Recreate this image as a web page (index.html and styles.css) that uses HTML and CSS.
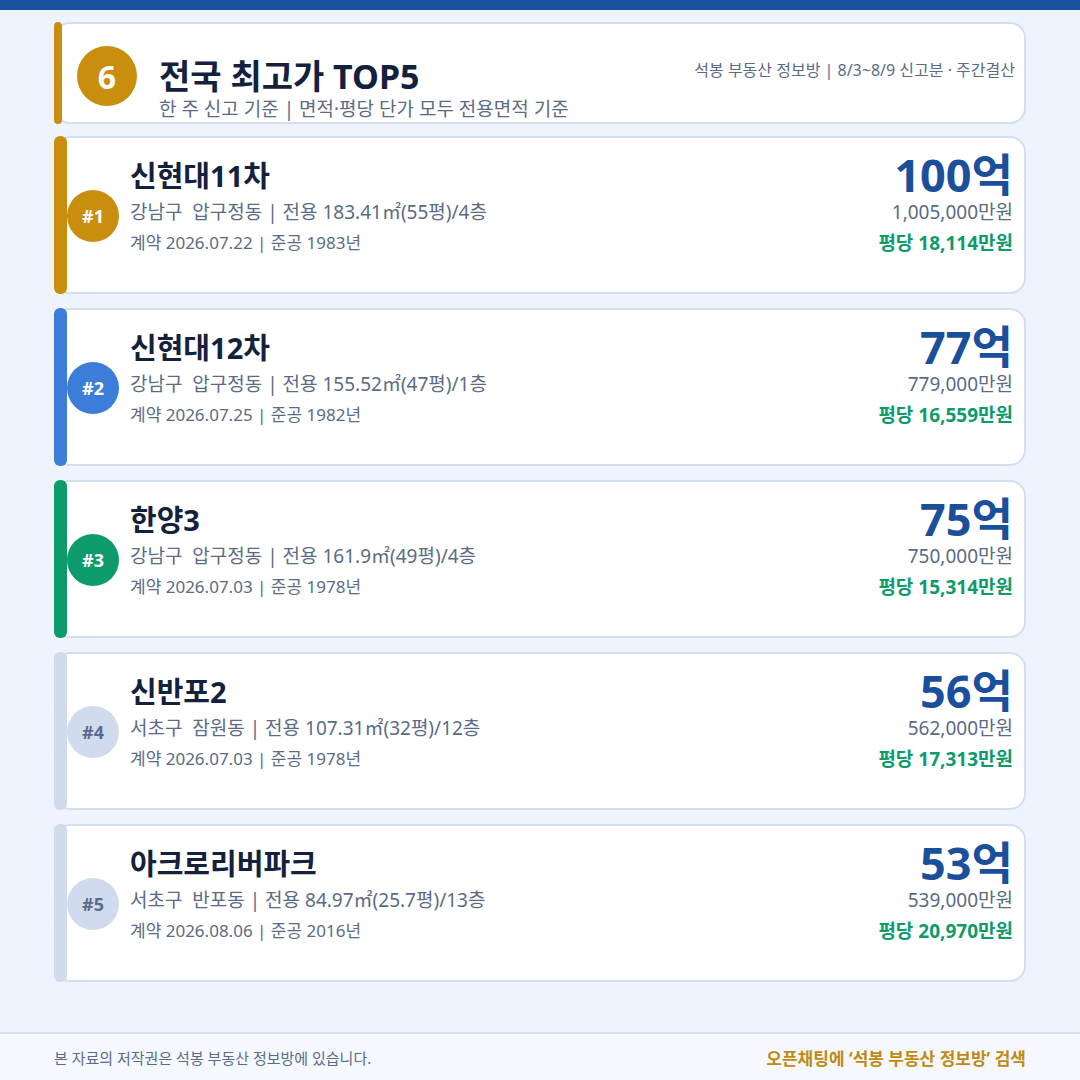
FILE: index.html
```html
<!DOCTYPE html>
<html lang="ko">
<head>
    <meta charset="UTF-8" />
    <meta name="viewport" content="width=device-width, initial-scale=1.0" />
    <title>전국 최고가 TOP5</title>
    <link rel="stylesheet" href="styles.css">
</head>
<body>

<div class="topbar"></div>

<div class="main">
    <div class="head">
        <div class="head-num">6</div>
        <div class="head-text">
            <h1>전국 최고가 TOP5</h1>
            <div class="head-sub">한 주 신고 기준 | 면적·평당 단가 모두 전용면적 기준</div>
        </div>
        <div class="head-meta">석봉 부동산 정보방 | 8/3~8/9 신고분 · 주간결산</div>
    </div>

    <div class="card gold">
        <div class="rank">#1</div>
        <div class="info">
            <div class="name">신현대11차</div>
            <div class="line">강남구&nbsp; 압구정동 | 전용 183.41㎡(55평)/4층</div>
            <div class="line small">계약 2026.07.22 | 준공 1983년</div>
        </div>
        <div class="price">
            <div class="big">100억</div>
            <div class="won">1,005,000만원</div>
            <div class="per">평당 18,114만원</div>
        </div>
    </div>

    <div class="card blue">
        <div class="rank">#2</div>
        <div class="info">
            <div class="name">신현대12차</div>
            <div class="line">강남구&nbsp; 압구정동 | 전용 155.52㎡(47평)/1층</div>
            <div class="line small">계약 2026.07.25 | 준공 1982년</div>
        </div>
        <div class="price">
            <div class="big">77억</div>
            <div class="won">779,000만원</div>
            <div class="per">평당 16,559만원</div>
        </div>
    </div>

    <div class="card green">
        <div class="rank">#3</div>
        <div class="info">
            <div class="name">한양3</div>
            <div class="line">강남구&nbsp; 압구정동 | 전용 161.9㎡(49평)/4층</div>
            <div class="line small">계약 2026.07.03 | 준공 1978년</div>
        </div>
        <div class="price">
            <div class="big">75억</div>
            <div class="won">750,000만원</div>
            <div class="per">평당 15,314만원</div>
        </div>
    </div>

    <div class="card plain">
        <div class="rank">#4</div>
        <div class="info">
            <div class="name">신반포2</div>
            <div class="line">서초구&nbsp; 잠원동 | 전용 107.31㎡(32평)/12층</div>
            <div class="line small">계약 2026.07.03 | 준공 1978년</div>
        </div>
        <div class="price">
            <div class="big">56억</div>
            <div class="won">562,000만원</div>
            <div class="per">평당 17,313만원</div>
        </div>
    </div>

    <div class="card plain">
        <div class="rank">#5</div>
        <div class="info">
            <div class="name">아크로리버파크</div>
            <div class="line">서초구&nbsp; 반포동 | 전용 84.97㎡(25.7평)/13층</div>
            <div class="line small">계약 2026.08.06 | 준공 2016년</div>
        </div>
        <div class="price">
            <div class="big">53억</div>
            <div class="won">539,000만원</div>
            <div class="per">평당 20,970만원</div>
        </div>
    </div>
</div>

<div class="footer">
    <span>본 자료의 저작권은 석봉 부동산 정보방에 있습니다.</span>
    <span class="footer-cta">오픈채팅에 ‘석봉 부동산 정보방’ 검색</span>
</div>

</body>
</html>
```

FILE: styles.css
```css
* {
    box-sizing: border-box;
}
body {
    margin: 0;
    width: 1080px;
    height: 1080px;
    display: flex;
    flex-direction: column;
    background-color: #eef3fd;
    font-family: "Noto Sans", "Noto Sans CJK KR", sans-serif;
    color: #14213d;
}
.topbar {
    height: 10px;
    background-color: #1a52a0;
}
.main {
    flex: 1;
    padding: 12px 54px 0;
    display: flex;
    flex-direction: column;
    gap: 14px;
}

/* header card */
.head {
    position: relative;
    height: 102px;
    margin-bottom: -2px;
    display: flex;
    align-items: flex-start;
    background: white;
    border: 2px solid #d3deef;
    border-radius: 16px;
    padding: 0 9px 0 21px;
}
.head::before {
    content: "";
    position: absolute;
    left: -2px;
    top: -2px;
    bottom: -2px;
    width: 8px;
    border-radius: 4px;
    background-color: #c98e0e;
}
.head-num {
    width: 60px;
    height: 60px;
    margin-top: 22px;
    border-radius: 50%;
    background-color: #c98e0e;
    color: white;
    font-size: 32px;
    font-weight: bold;
    display: flex;
    align-items: center;
    justify-content: center;
}
.head-text {
    flex: 1;
    padding: 33px 0 0 22px;
}
h1 {
    margin: 0;
    font-size: 34px;
    line-height: 38px;
    font-weight: bold;
}
.head-sub {
    margin-top: 2px;
    font-size: 19px;
    line-height: 24px;
    color: #5b6b86;
}
.head-meta {
    padding-top: 36px;
    font-size: 16px;
    line-height: 20px;
    color: #5b6b86;
}

/* ranking cards */
.card {
    position: relative;
    height: 158px;
    display: flex;
    align-items: flex-start;
    background: white;
    border: 2px solid #d3deef;
    border-radius: 16px;
    padding: 0 11px 0 11px;
}
.card::before {
    content: "";
    position: absolute;
    left: -2px;
    top: -2px;
    bottom: -2px;
    width: 13px;
    border-radius: 6px;
    background-color: var(--accent);
}
.gold { --accent: #c98e0e; }
.blue { --accent: #3b7dd8; }
.green { --accent: #0d9b6b; }
.plain { --accent: #d0dcee; }

.rank {
    width: 52px;
    height: 52px;
    margin-top: 52px;
    border-radius: 50%;
    background-color: var(--accent);
    color: white;
    font-size: 18px;
    font-weight: bold;
    display: flex;
    align-items: center;
    justify-content: center;
}
.plain .rank {
    color: #5a6b8c;
}
.info {
    flex: 1;
    padding: 20px 0 0 11px;
}
.name {
    font-size: 29px;
    line-height: 36px;
    font-weight: bold;
}
.line {
    margin-top: 5px;
    font-size: 19px;
    line-height: 26px;
    color: #5b6b86;
}
.line.small {
    margin-top: 6px;
    font-size: 17px;
    line-height: 24px;
}
.price {
    padding-top: 13px;
    text-align: right;
}
.big {
    font-size: 45px;
    line-height: 48px;
    font-weight: bold;
    color: #1a4f9c;
}
.won {
    font-size: 19px;
    line-height: 26px;
    color: #5b6b86;
}
.per {
    margin-top: 5px;
    font-size: 19px;
    line-height: 26px;
    font-weight: bold;
    color: #0d9b6b;
}

.footer {
    height: 48px;
    border-top: 2px solid #d6e0f0;
    background-color: #f5f8fe;
    padding: 0 54px;
    display: flex;
    align-items: center;
    justify-content: space-between;
    font-size: 15px;
    color: #5b6b86;
}
.footer-cta {
    font-size: 17px;
    font-weight: bold;
    color: #c08a12;
}
```
